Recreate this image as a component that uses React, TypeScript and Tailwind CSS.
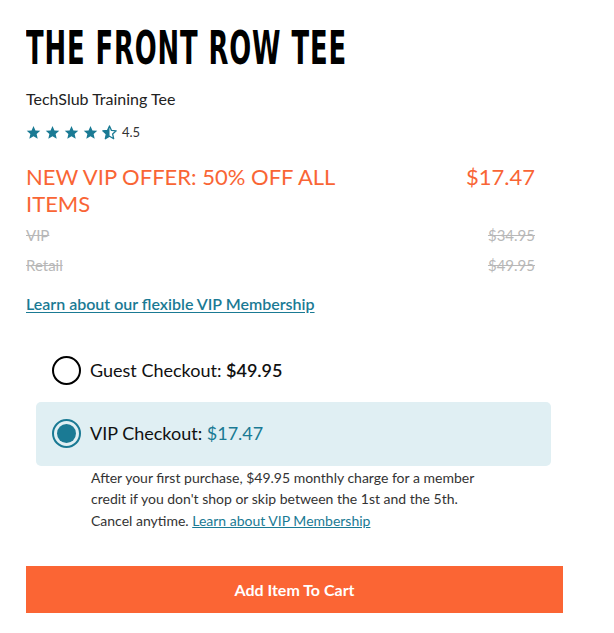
import React from "react";

const STAR = "M12 1.5l3.1 7.1 7.7.7-5.8 5.1 1.7 7.6L12 18l-6.7 4 1.7-7.6L1.2 9.3l7.7-.7z";

const Star = ({ half = false }: { half?: boolean }) => (
  <svg width="15" height="15" viewBox="0 0 24 24">
    <defs>
      <clipPath id="lefthalf">
        <rect x="0" y="0" width="12" height="24" />
      </clipPath>
    </defs>
    {half ? (
      <>
        <path d={STAR} fill="none" stroke="#1a7a94" strokeWidth="2" strokeLinejoin="round" />
        <path d={STAR} fill="#1a7a94" clipPath="url(#lefthalf)" />
      </>
    ) : (
      <path d={STAR} fill="#1a7a94" />
    )}
  </svg>
);

export default function App() {
  return (
    <div
      className="w-[614px] h-[633px] bg-white text-[#222] pl-[26px] pr-[52px] pt-[24px]"
      style={{ fontFamily: "Lato, 'Open Sans', sans-serif" }}
    >
      <h1
        className="text-[47px] leading-[48px] font-bold text-black tracking-[1.5px] whitespace-nowrap"
        style={{ fontFamily: "'DejaVu Sans Condensed', 'Liberation Sans', sans-serif", transform: "scaleX(0.61)", transformOrigin: "left" }}
      >
        THE FRONT ROW TEE
      </h1>
      <div className="mt-[17px] text-[16px] leading-[20px] text-[#222]">TechSlub Training Tee</div>
      <div className="mt-[14px] flex items-center gap-[4px]">
        <Star />
        <Star />
        <Star />
        <Star />
        <Star half />
        <span className="ml-[1px] text-[13px] text-[#333]">4.5</span>
      </div>

      <div className="mt-[20px] flex justify-between text-[#f96535] text-[22px] leading-[27px]">
        <div className="w-[330px]">NEW VIP OFFER: 50% OFF ALL ITEMS</div>
        <div className="pr-[27px]">$17.47</div>
      </div>
      <div className="mt-[3px] flex justify-between text-[15px] leading-[30px] text-[#b8b8b8] line-through pr-[27px]">
        <span>VIP</span>
        <span>$34.95</span>
      </div>
      <div className="flex justify-between text-[15px] leading-[30px] text-[#b8b8b8] line-through pr-[27px]">
        <span>Retail</span>
        <span>$49.95</span>
      </div>

      <a className="mt-[14px] inline-block text-[16px] leading-[20px] font-semibold text-[#1a7a94] underline underline-offset-2">
        Learn about our flexible VIP Membership
      </a>

      <div className="mt-[40px] flex items-center gap-[9px] pl-[26px] h-[30px]">
        <span className="w-[29px] h-[29px] rounded-full border-2 border-black" />
        <span className="text-[18px] text-[#111]">
          Guest Checkout: <span className="font-semibold">$49.95</span>
        </span>
      </div>

      <div className="mt-[16px] ml-[10px] w-[515px] h-[64px] rounded-[5px] bg-[#e0eff3] flex items-center gap-[9px] pl-[16px]">
        <span className="w-[29px] h-[29px] rounded-full border-2 border-[#1a7a94] flex items-center justify-center">
          <span className="w-[19px] h-[19px] rounded-full bg-[#1a7a94]" />
        </span>
        <span className="text-[18px] text-[#111]">
          VIP Checkout: <span className="text-[#1a7a94]">$17.47</span>
        </span>
      </div>

      <p className="ml-[65px] mt-[1px] w-[400px] text-[14px] leading-[21.5px] text-[#333]">
        After your first purchase, $49.95 monthly charge for a member credit if you don't shop or skip between the 1st and the 5th. Cancel anytime.{" "}
        <a className="text-[#1a7a94] underline">Learn about VIP Membership</a>
      </p>

      <button className="mt-[35px] w-[537px] h-[47px] bg-[#fb6534] text-white text-[16px] font-bold">
        Add Item To Cart
      </button>
    </div>
  );
}
